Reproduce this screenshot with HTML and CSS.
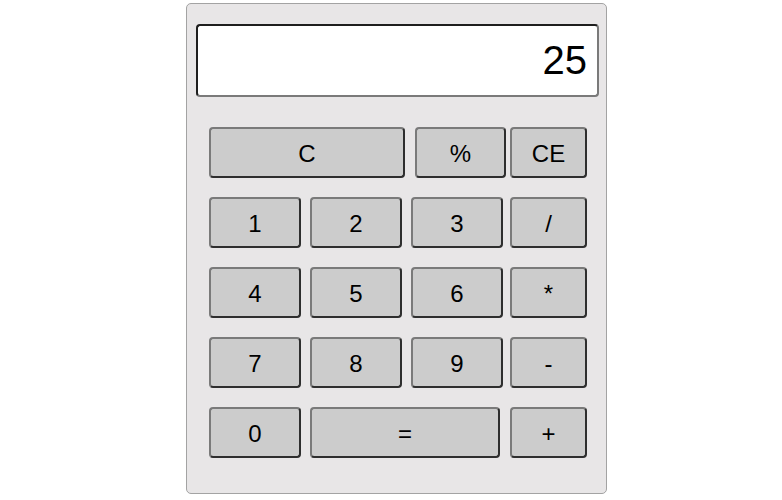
FILE: index.html
```html
<!DOCTYPE html>
<html>
<head>
<meta charset="utf-8">
<title>Calculator</title>
<link rel="stylesheet" href="styles.css">
</head>
<body>
<div class="calc">
  <div class="display">25</div>
  <div class="keys">
    <button class="key key-c">C</button>
    <button class="key key-pct">%</button>
    <button class="key key-op">CE</button>
    <button class="key">1</button>
    <button class="key">2</button>
    <button class="key">3</button>
    <button class="key key-op">/</button>
    <button class="key">4</button>
    <button class="key">5</button>
    <button class="key">6</button>
    <button class="key key-op">*</button>
    <button class="key">7</button>
    <button class="key">8</button>
    <button class="key">9</button>
    <button class="key key-op">-</button>
    <button class="key">0</button>
    <button class="key key-eq">=</button>
    <button class="key key-op">+</button>
  </div>
</div>
</body>
</html>
```
FILE: styles.css
```css
html, body {
  margin: 0;
  padding: 0;
  background: #ffffff;
  font-family: "Liberation Sans", Arial, sans-serif;
}

.calc {
  box-sizing: border-box;
  width: 421px;
  height: 491px;
  margin: 3px 0 0 186px;
  padding: 20px 7px 0 9px;
  background: #e8e6e7;
  border: 1px solid #a3a3a3;
  border-radius: 5px;
}

.display {
  box-sizing: border-box;
  width: 403px;
  height: 73px;
  padding: 0 10px;
  background: #ffffff;
  border: 2px solid;
  border-color: #1e1e1e #7a7a7a #7a7a7a #1e1e1e;
  border-radius: 4px;
  font-size: 40px;
  line-height: 69px;
  text-align: right;
  color: #000;
}

.keys {
  display: grid;
  grid-template-columns: 101px 101px 99px 77px;
  grid-auto-rows: 51px;
  row-gap: 19px;
  margin: 30px 0 0 13px;
}

.key {
  box-sizing: border-box;
  width: 92px;
  height: 51px;
  margin: 0;
  padding: 3px 0 0;
  background: #cccccc;
  border: 2px solid;
  border-color: #7a7a7a #2e2e2e #2e2e2e #7a7a7a;
  border-radius: 4px;
  font-family: "Liberation Sans", Arial, sans-serif;
  font-size: 24px;
  color: #000;
}

.key-op {
  width: 77px;
}

.key-c {
  grid-column: span 2;
  width: 196px;
}

.key-pct {
  width: 91px;
  margin-left: 4px;
}

.key-eq {
  grid-column: span 2;
  width: 190px;
}
```
